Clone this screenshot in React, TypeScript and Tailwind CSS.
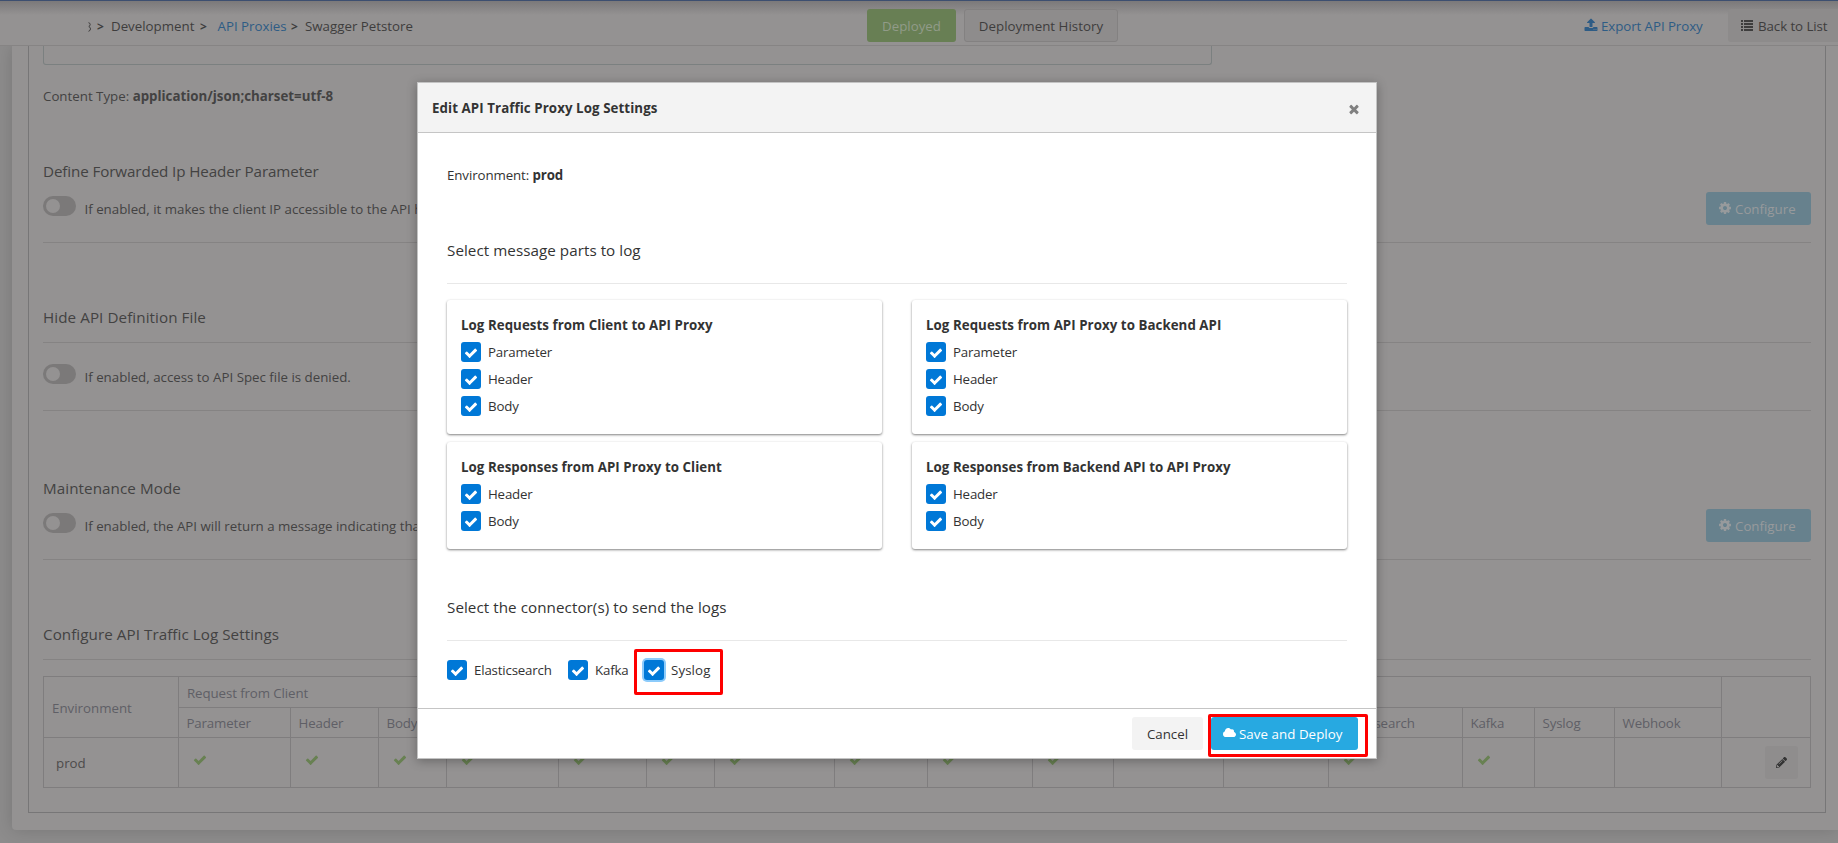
import React from "react";
import { FaCloud, FaPencilAlt } from "react-icons/fa";

const CHECK =
  "M1671 566q0 40-28 68l-724 724-136 136q-28 28-68 28t-68-28l-136-136-362-362q-28-28-28-68t28-68l136-136q28-28 68-28t68 28l294 295 656-657q28-28 68-28t68 28l136 136q28 28 28 68z";
const TIMES =
  "M1490 1322q0 40-28 68l-136 136q-28 28-68 28t-68-28l-294-294-294 294q-28 28-68 28t-68-28l-136-136q-28-28-28-68t28-68l294-294-294-294q-28-28-28-68t28-68l136-136q28-28 68-28t68 28l294 294 294-294q28-28 68-28t68 28l136 136q28 28 28 68t-28 68l-294 294 294 294q28 28 28 68z";
const COG =
  "M1152 896q0-106-75-181t-181-75-181 75-75 181 75 181 181 75 181-75 75-181zm512-109v222q0 12-8 23t-20 13l-185 28q-19 54-39 91 35 50 107 138 10 12 10 25t-9 23q-27 37-99 108t-94 71q-12 0-26-9l-138-108q-44 23-91 38-16 136-29 186-7 28-36 28h-222q-14 0-24.5-8.5t-11.5-21.5l-28-184q-49-16-90-37l-141 107q-10 9-25 9-14 0-25-11-126-114-165-168-7-10-7-23 0-12 8-23 15-21 51-66.5t54-70.5q-27-50-41-99l-183-27q-13-2-21-12.5t-8-23.5v-222q0-12 8-23t19-13l186-28q14-46 39-92-40-57-107-138-10-12-10-24 0-10 9-23 26-36 98.5-107.5t94.5-71.5q13 0 26 10l138 107q44-23 91-38 16-136 29-186 7-28 36-28h222q14 0 24.5 8.5t11.5 21.5l28 184q49 16 90 37l142-107q9-9 24-9 13 0 25 10 129 119 165 170 7 8 7 22 0 12-8 23-15 21-51 66.5t-54 70.5q26 50 41 98l183 28q13 2 21 12.5t8 23.5z";
const UPLOAD =
  "M1344 1472q0-26-19-45t-45-19-45 19-19 45 19 45 45 19 45-19 19-45zm256 0q0-26-19-45t-45-19-45 19-19 45 19 45 45 19 45-19 19-45zm128-224v320q0 40-28 68t-68 28h-1472q-40 0-68-28t-28-68v-320q0-40 28-68t68-28h427q21 56 70.5 92t110.5 36h256q61 0 110.5-36t70.5-92h427q40 0 68 28t28 68zm-325-648q-17 40-59 40h-256v448q0 26-19 45t-45 19h-256q-26 0-45-19t-19-45v-448h-256q-42 0-59-40-17-39 14-69l448-448q18-19 45-19t45 19l448 448q31 30 14 69z";

function Glyph({ d, className }: { d: string; className: string }) {
  return (
    <svg viewBox="0 0 1792 1792" fill="currentColor" className={className}>
      <path d={d} />
    </svg>
  );
}

function ListIcon() {
  return (
    <svg viewBox="0 0 12 11" fill="currentColor" className="mb-[3px] h-[11px] w-3" shapeRendering="crispEdges">
      <path d="M0 0h2v2H0zM3 0h9v2H3zM0 3h2v2H0zM3 3h9v2H3zM0 6h2v2H0zM3 6h9v2H3zM0 9h2v2H0zM3 9h9v2H3z" />
    </svg>
  );
}

function Toggle() {
  return (
    <span className="flex h-5 w-[33px] shrink-0 items-center rounded-full bg-[#7b7979] pl-[3px]">
      <span className="size-[14px] rounded-full bg-[#949292]" />
    </span>
  );
}

function Heading({ children, className = "tracking-[0.08px]" }: { children: React.ReactNode; className?: string }) {
  return <h2 className={`text-[15.2px] leading-6 ${className}`}>{children}</h2>;
}

function ConfigureButton() {
  return (
    <button className="flex h-[33px] w-[105px] items-center rounded-[3px] bg-[#67818d] pt-0.5 pl-3 text-[#979a9c]">
      <Glyph d={COG} className="mr-[3px] mb-1 size-[14px]" />
      Configure
    </button>
  );
}

function ToggleRow({ text, configurable, className }: { text: string; configurable?: boolean; className: string }) {
  return (
    <div className={`flex justify-between border-b border-[#858383] ${className}`}>
      <div className="flex gap-[8.5px] pt-1">
        <Toggle />
        <span className="mt-[3px] leading-5">{text}</span>
      </div>
      {configurable && <ConfigureButton />}
    </div>
  );
}

const COLUMNS = [
  { label: "Parameter", w: 112, on: true },
  { label: "Header", w: 88, on: true },
  { label: "Body", w: 68, on: true },
  { label: "", w: 112, on: true },
  { label: "", w: 88, on: true },
  { label: "", w: 68, on: true },
  { label: "", w: 120, on: true },
  { label: "", w: 93, on: true },
  { label: "", w: 105, on: true },
  { label: "", w: 81, on: true },
  { label: "", w: 110, on: false },
  { label: "", w: 105, on: false },
  { label: "Elasticsearch", w: 134, on: true },
  { label: "Kafka", w: 72, on: true },
  { label: "Syslog", w: 80, on: false },
  { label: "Webhook", w: 107, on: false },
];

function LogTable() {
  return (
    <table className="w-[1768px] table-fixed border-collapse text-left text-[#5f5f66] [&_td]:border [&_td]:border-[#7f7d7e] [&_th]:border [&_th]:border-[#7f7d7e] [&_th]:font-normal">
      <colgroup>
        <col style={{ width: 135 }} />
        {COLUMNS.map((c, i) => (
          <col key={i} style={{ width: c.w }} />
        ))}
        <col style={{ width: 89 }} />
      </colgroup>
      <thead>
        <tr className="h-[31px]">
          <th rowSpan={2} className="pt-1 pl-2">Environment</th>
          <th colSpan={3} className="pt-1 pl-2 tracking-[-0.1px]">Request from Client</th>
          <th colSpan={3} />
          <th colSpan={2} />
          <th colSpan={2} />
          <th colSpan={6} />
          <th rowSpan={2} />
        </tr>
        <tr className="h-[30px]">
          {COLUMNS.map((c, i) => (
            <th key={i} className="pt-0.5 pl-[7.5px] tracking-[-0.15px]">{c.label}</th>
          ))}
        </tr>
      </thead>
      <tbody>
        <tr className="h-[50px]">
          <td className="pt-[3px] pl-3 text-[#4d4b4b]">prod</td>
          {COLUMNS.map((c, i) => (
            <td key={i} className="pb-1.5 pl-[14px]">
              {c.on && <Glyph d={CHECK} className="size-[14px] text-[#688152]" />}
            </td>
          ))}
          <td className="pl-[43px]">
            <span className="flex h-[33px] w-[33px] items-center justify-center rounded-[3px] bg-[#8f8d8d] text-[#333]">
              <FaPencilAlt className="size-[11px]" />
            </span>
          </td>
        </tr>
      </tbody>
    </table>
  );
}

function Checkbox({ label, focus }: { label: string; focus?: boolean }) {
  return (
    <label className="flex h-5 items-center gap-[7px]">
      <span
        className={`flex size-5 items-center justify-center rounded-[3px] bg-[#0078d7] text-white ${
          focus ? "ring-2 ring-[#8ccbfb]" : ""
        }`}
      >
        <Glyph d={CHECK} className="mt-0.5 size-[14px]" />
      </span>
      <span className={focus ? "leading-5 tracking-[0.1px]" : "leading-5 tracking-[-0.18px]"}>{label}</span>
    </label>
  );
}

function LogCard({ title, parts, className }: { title: string; parts: string[]; className: string }) {
  return (
    <section
      className={`rounded-[3px] bg-white px-[14px] pt-[15px] shadow-[0_1px_3px_rgba(0,0,0,0.24),0_1px_2px_rgba(0,0,0,0.3)] ${className}`}
    >
      <h4 className="leading-5 font-bold tracking-[0.05px]">{title}</h4>
      <div className="mt-[7px] flex flex-col gap-[7px]">
        {parts.map((p) => (
          <Checkbox key={p} label={p} />
        ))}
      </div>
    </section>
  );
}

function Dialog() {
  return (
    <div className="absolute top-[81px] left-[417px] flex h-[677px] w-[960px] flex-col border border-[#c3c3c3] bg-white text-[#333] shadow-[0_2px_10px_rgba(0,0,0,0.3)]">
      <header className="flex h-[50px] items-center justify-between border-b border-[#c5c5c5] bg-[#f3f3f3] pr-[15px] pl-[14px]">
        <h3 className="mt-[3px] font-bold tracking-[0.08px]">Edit API Traffic Proxy Log Settings</h3>
        <Glyph d={TIMES} className="mt-[3px] size-[14px] text-[#808080]" />
      </header>
      <div className="flex-1 px-[29px] pt-8">
        <p className="leading-5 tracking-[-0.1px]">
          Environment: <b>prod</b>
        </p>
        <h4 className="mt-[53px] border-b border-[#e8e8e8] pb-[21px] text-[15.2px] leading-6 tracking-[0.05px]">
          Select message parts to log
        </h4>
        <div className="mt-4 grid grid-cols-2 gap-x-[30px] gap-y-2">
          <LogCard
            className="h-[134px]"
            title="Log Requests from Client to API Proxy"
            parts={["Parameter", "Header", "Body"]}
          />
          <LogCard
            className="h-[134px]"
            title="Log Requests from API Proxy to Backend API"
            parts={["Parameter", "Header", "Body"]}
          />
          <LogCard className="h-[107px]" title="Log Responses from API Proxy to Client" parts={["Header", "Body"]} />
          <LogCard
            className="h-[107px]"
            title="Log Responses from Backend API to API Proxy"
            parts={["Header", "Body"]}
          />
        </div>
        <h4 className="mt-[46px] border-b border-[#e8e8e8] pb-[21px] text-[15.2px] leading-6 tracking-[0.06px]">
          Select the connector(s) to send the logs
        </h4>
        <div className="mt-[19px] flex">
          <div className="w-[121px]">
            <Checkbox label="Elasticsearch" />
          </div>
          <div className="w-[76px]">
            <Checkbox label="Kafka" />
          </div>
          <div className="relative">
            <Checkbox label="Syslog" focus />
            <span className="absolute -top-[11px] -left-[10px] h-[46px] w-[89px] rounded-[2px] border-[3px] border-[#fe0000]" />
          </div>
        </div>
      </div>
      <footer className="flex h-[50px] items-center justify-end gap-2 border-t border-[#c5c5c5] pr-[18px]">
        <button className="h-[33px] w-[71px] rounded-[3px] bg-[#f3f3f3] pt-0.5">Cancel</button>
        <div className="relative">
          <button className="flex h-[33px] w-[147px] items-center rounded-[3px] bg-[#27a9e1] pt-0.5 pl-3 tracking-[0.06px] text-white">
            <FaCloud className="mr-[3px] mb-1 size-[13px]" />
            Save and Deploy
          </button>
          <span className="absolute -top-[3px] -left-[3px] h-[43px] w-[160px] rounded-[2px] border-[3px] border-[#fe0000]" />
        </div>
      </footer>
    </div>
  );
}

function TopBar() {
  return (
    <header className="relative z-10 flex h-[45px] shrink-0 items-center border-b border-[#868484] bg-[#949292] bg-linear-to-b from-[#7b797a] to-[#949292] to-[14px] pt-[5px] text-[#3e3d3d]">
      <nav className="flex w-[867px] items-center pt-0.5 pl-[88px] whitespace-pre">
        <svg viewBox="0 0 3 10" className="h-[10px] w-[3px]" fill="none" stroke="currentColor">
          <path d="M0.5 0.7Q2.3 1 2.2 2.6Q2 4 0.8 4.5Q2.5 5.2 2.5 6.9Q2.4 8.8 0.5 9.3" />
        </svg>
        <b className="ml-[6px] w-[14px] text-xs">&gt;</b>
        <span className="w-[89px]">Development</span>
        <b className="w-[17.5px] text-xs">&gt;</b>
        <span className="w-[73.5px] text-[#2e5c85]">API Proxies</span>
        <b className="w-[14px] text-xs">&gt;</b>
        <span>Swagger Petstore</span>
      </nav>
      <button className="h-[33px] w-[89px] rounded-[3px] bg-[#687f54] pt-0.5 text-[#919b89]">Deployed</button>
      <button className="ml-2 h-[33px] w-[154px] rounded-[3px] border border-[#838181] bg-[#8e8c8c] pt-0.5 tracking-[0.03px]">
        Deployment History
      </button>
      <a className="ml-[466px] flex w-[144px] items-center gap-[3px] pt-0.5 tracking-[-0.07px] text-[#2e5c85]">
        <Glyph d={UPLOAD} className="mb-1 size-[14px]" />
        Export API Proxy
      </a>
      <button className="flex h-[33px] flex-1 items-center gap-[5px] rounded-l-[3px] bg-[#8d8b8b] pt-0.5 pl-[13px] tracking-[-0.07px] whitespace-nowrap">
        <ListIcon />
        Back to List
      </button>
    </header>
  );
}

export default function App() {
  return (
    <div className="relative flex h-[843px] w-[1838px] flex-col overflow-hidden border-t border-[#3d4f70] bg-[#8d8c8c] font-['Open_Sans','Noto_Sans',sans-serif] text-[13.3px] text-[#434242]">
      <TopBar />
      <main className="ml-3 h-[784px] rounded-bl-[4px] bg-[#949292] pl-4 shadow-[0_0_18px_rgba(0,0,0,0.16)]">
        <div className="flex h-[767px] w-[1798px] flex-col border border-t-0 border-[#777677] pl-[14px]">
          <div className="h-[19px] w-[1169px] shrink-0 rounded-b-[3px] border border-t-0 border-[#7b8080]" />
          <p className="mt-[21px] leading-5">
            Content Type: <b>application/json;charset=utf-8</b>
          </p>
          <div className="mt-[53px] w-[1768px]">
            <Heading className="tracking-[-0.11px]">Define Forwarded Ip Header Parameter</Heading>
          </div>
          <ToggleRow className="mt-[9px] h-[51px] w-[1768px]" text="If enabled, it makes the client IP accessible to the API h" configurable />
          <div className="mt-[62px] w-[1768px] border-b border-[#858383] pb-[13px]">
            <Heading>Hide API Definition File</Heading>
          </div>
          <ToggleRow className="mt-[17px] h-[51px] w-[1768px]" text="If enabled, access to API Spec file is denied." />
          <div className="mt-[65px]">
            <Heading>Maintenance Mode</Heading>
          </div>
          <ToggleRow className="mt-[9px] h-[51px] w-[1768px]" text="If enabled, the API will return a message indicating that" configurable />
          <div className="mt-[62px] mb-4 w-[1768px] border-b border-[#858383] pb-[13px]">
            <Heading className="tracking-[0.06px]">Configure API Traffic Log Settings</Heading>
          </div>
          <LogTable />
        </div>
      </main>
      <Dialog />
    </div>
  );
}
